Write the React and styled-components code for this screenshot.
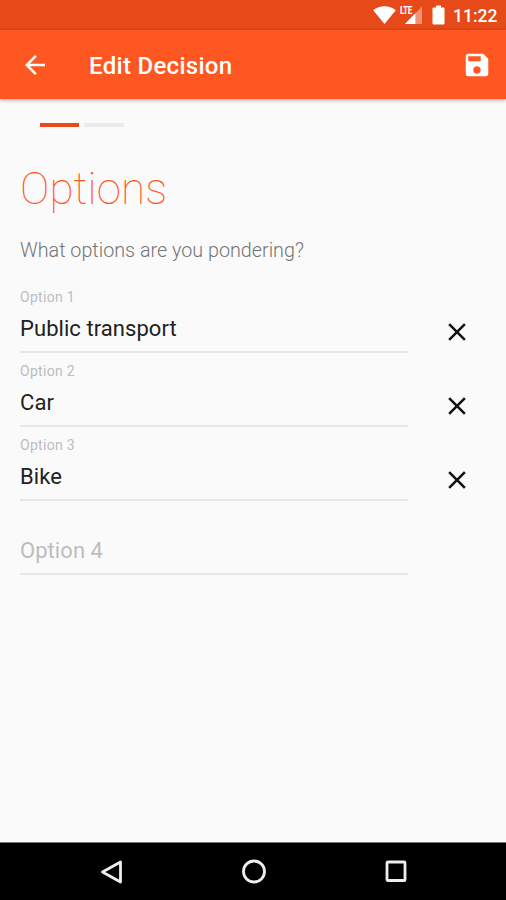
import styled, { createGlobalStyle } from "styled-components";

const options = [
  { id: 1, value: "Public transport" },
  { id: 2, value: "Car" },
  { id: 3, value: "Bike" },
  { id: 4, value: "" },
];

function StatusIcons() {
  return (
    <StatusSvg width="76" height="30" viewBox="0 0 76 30">
      {/* wifi */}
      <path d="M1.2 10.2C7.6 4.8 17.4 4.8 23.8 10.2L12.5 24Z" />
      {/* LTE signal */}
      <path opacity="0.4" d="M50 6.5V24H33Z" />
      <path d="M43.4 13.3V24H33Z" />
      {/* battery */}
      <path d="M64 5.5h5v2h2.2a1.3 1.3 0 0 1 1.3 1.3v14.4a1.3 1.3 0 0 1-1.3 1.3h-9.4a1.3 1.3 0 0 1-1.3-1.3V8.8a1.3 1.3 0 0 1 1.3-1.3H64Z" />
    </StatusSvg>
  );
}

function OptionRow({ option }) {
  const label = `Option ${option.id}`;

  return (
    <Row>
      <Field>
        {option.value && <FieldLabel>{label}</FieldLabel>}
        <FieldValue $empty={!option.value}>{option.value || label}</FieldValue>
      </Field>
      {option.value && (
        <IconButton aria-label={`Remove ${label}`}>
          <svg width="30" height="30" viewBox="0 0 24 24" fill="#111">
            <path d="M19 6.41 17.59 5 12 10.59 6.41 5 5 6.41 10.59 12 5 17.59 6.41 19 12 13.41 17.59 19 19 17.59 13.41 12z" />
          </svg>
        </IconButton>
      )}
    </Row>
  );
}

function App() {
  return (
    <Screen>
      <GlobalStyle />
      <StatusBar>
        <StatusGroup>
          <StatusIcons />
          <Lte>LTE</Lte>
        </StatusGroup>
        <Clock>11:22</Clock>
      </StatusBar>

      <AppBar>
        <IconButton aria-label="Back">
          <svg width="30" height="30" viewBox="0 0 24 24" fill="#fff">
            <path d="M20 11H7.83l5.59-5.59L12 4l-8 8 8 8 1.41-1.41L7.83 13H20v-2z" />
          </svg>
        </IconButton>
        <Title>Edit Decision</Title>
        <IconButton aria-label="Save">
          <svg width="30" height="30" viewBox="0 0 24 24" fill="#fff">
            <path d="M17 3H5c-1.11 0-2 .9-2 2v14c0 1.1.89 2 2 2h14c1.1 0 2-.9 2-2V7l-4-4zm-5 16c-1.66 0-3-1.34-3-3s1.34-3 3-3 3 1.34 3 3-1.34 3-3 3zm3-10H5V5h10v4z" />
          </svg>
        </IconButton>
      </AppBar>

      <Content>
        <Steps>
          <Step $active />
          <Step />
        </Steps>
        <Heading>Options</Heading>
        <Question>What options are you pondering?</Question>
        {options.map((option) => (
          <OptionRow key={option.id} option={option} />
        ))}
      </Content>

      <NavBar>
        <svg width="30" height="30" viewBox="0 0 30 30">
          <path d="M23.5 5V25L5.5 15Z" />
        </svg>
        <svg width="30" height="30" viewBox="0 0 30 30">
          <circle cx="15" cy="14.5" r="10.5" />
        </svg>
        <svg width="30" height="30" viewBox="0 0 30 30">
          <rect x="6" y="5" width="18" height="18.5" rx="0.8" />
        </svg>
      </NavBar>
    </Screen>
  );
}

export default App;

const GlobalStyle = createGlobalStyle`
  body {
    margin: 0;
    font-family: Roboto, sans-serif;
    background: #fafafa;
  }

  * {
    box-sizing: border-box;
  }
`;

const Screen = styled.div`
  display: flex;
  flex-direction: column;
  width: 506px;
  height: 900px;
  overflow: hidden;
  background: #fafafa;
`;

const StatusBar = styled.header`
  display: flex;
  align-items: center;
  justify-content: flex-end;
  height: 30px;
  padding-right: 9px;
  background: #e64a19;
  color: #fff;
`;

const StatusGroup = styled.div`
  position: relative;
  width: 76px;
  height: 30px;
  margin-right: 5px;
`;

const StatusSvg = styled.svg`
  display: block;
  fill: #fff;
`;

/* sits over the corner of the signal triangle */
const Lte = styled.span`
  position: absolute;
  left: 28px;
  top: 5px;
  font-size: 11px;
  font-weight: 700;
  line-height: 11px;
  letter-spacing: -0.6px;
  transform: scaleX(0.75);
  transform-origin: left;
`;

const Clock = styled.span`
  width: 44px;
  font-size: 17.5px;
  font-weight: 500;
  line-height: 30px;
  white-space: nowrap;
  padding-top: 2px;
`;

const AppBar = styled.div`
  display: flex;
  align-items: center;
  flex-shrink: 0;
  height: 69px;
  padding: 0 14px 0 20px;
  background: #ff5722;
  box-shadow: 0 1px 4px rgba(0, 0, 0, 0.35);
  z-index: 1;
`;

const Title = styled.h1`
  flex: 1;
  margin: 2px 0 0 39px;
  color: #fff;
  font-size: 24px;
  font-weight: 500;
  line-height: 30px;
  letter-spacing: 0.3px;
`;

const IconButton = styled.button`
  display: flex;
  padding: 0;
  border: 0;
  background: none;
  cursor: pointer;
`;

const Content = styled.main`
  flex: 1;
  padding: 24px 20px 0;
`;

const Steps = styled.div`
  display: flex;
  gap: 5px;
  height: 4px;
  padding-left: 20px;
`;

const Step = styled.span`
  width: ${(props) => (props.$active ? "39px" : "40px")};
  height: 4px;
  background: ${(props) => (props.$active ? "#e64a19" : "#ebebeb")};
`;

const Heading = styled.h2`
  margin: 34px 0 0;
  color: #ff5722;
  font-size: 44px;
  font-weight: 100;
  line-height: 56px;
  letter-spacing: 0.1px;
`;

const Question = styled.p`
  margin: 21px 0 15px;
  color: #757575;
  font-size: 19.75px;
  font-weight: 300;
  line-height: 26px;
`;

const Row = styled.div`
  display: flex;
  align-items: flex-end;
  height: 74px;
  gap: 34px;

  ${IconButton} {
    margin-bottom: 6px;
  }
`;

const Field = styled.label`
  display: flex;
  flex-direction: column;
  justify-content: flex-end;
  width: 388px;
  height: 74px;
  border-bottom: 2px solid #e6e6e6;
`;

const FieldLabel = styled.span`
  color: #bdbdbd;
  font-size: 14px;
  line-height: 16px;
  letter-spacing: 0.3px;
`;

const FieldValue = styled.span`
  margin: 10px 0 8px;
  color: ${(props) => (props.$empty ? "#bdbdbd" : "#212121")};
  font-size: 22px;
  line-height: 28px;
  letter-spacing: 0.06px;
`;

const NavBar = styled.nav`
  display: flex;
  align-items: center;
  justify-content: space-between;
  flex-shrink: 0;
  height: 58px;
  padding: 0 95px 0 97px;
  border-top: 1px solid #777;
  background: #000;

  svg {
    fill: none;
    stroke: #eee;
    stroke-width: 2.8;
    stroke-linejoin: round;
  }
`;
